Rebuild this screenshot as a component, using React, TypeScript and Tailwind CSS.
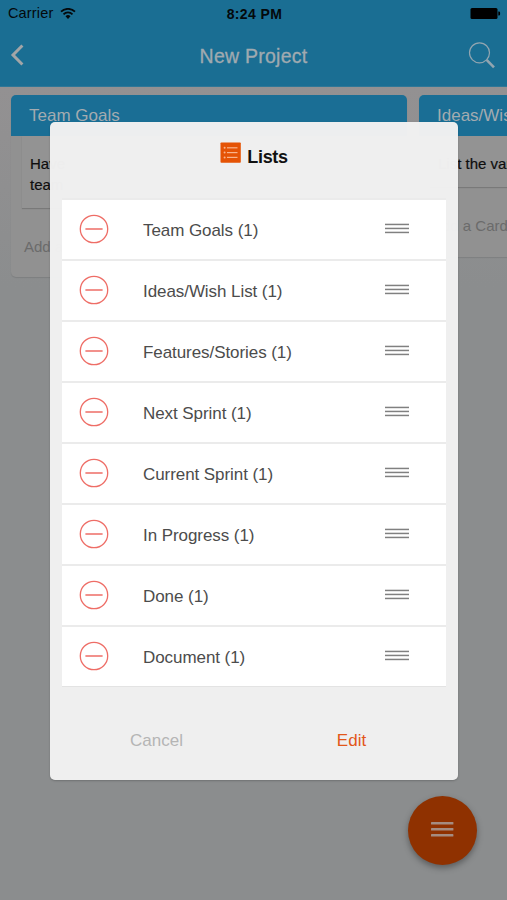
// src/App.tsx
import type { ReactNode } from 'react';

// ─────────────────────────────────────────────────────────────────────────────
// Static seed data
// ─────────────────────────────────────────────────────────────────────────────

interface ProjectList {
  id: number;
  name: string;
  count: number;
}

const LISTS: ProjectList[] = [
  { id: 1, name: 'Team Goals',       count: 1 },
  { id: 2, name: 'Ideas/Wish List',  count: 1 },
  { id: 3, name: 'Features/Stories', count: 1 },
  { id: 4, name: 'Next Sprint',      count: 1 },
  { id: 5, name: 'Current Sprint',   count: 1 },
  { id: 6, name: 'In Progress',      count: 1 },
  { id: 7, name: 'Done',             count: 1 },
  { id: 8, name: 'Document',         count: 1 },
];

// ── Icons ────────────────────────────────────────────────────────────────────

function WifiIcon() {
  return (
    <svg width="16" height="12" viewBox="0 0 16 12" fill="none" stroke="#04090c" strokeWidth="1.8">
      <path d="M1 3.7a10 10 0 0 1 14 0" />
      <path d="M3.5 6.3a6.4 6.4 0 0 1 9 0" />
      <path d="M8 10.9 5.5 8.3a3.6 3.6 0 0 1 5 0Z" fill="#04090c" stroke="none" />
    </svg>
  );
}

function BatteryIcon() {
  return (
    <svg width="31" height="12" viewBox="0 0 31 12" fill="#000">
      <rect x="0.5" y="0" width="27" height="11" rx="1.5" />
      <path d="M28.3 3.5h0.6a1.2 1.2 0 0 1 1.2 1.2v1.6a1.2 1.2 0 0 1-1.2 1.2h-0.6z" />
    </svg>
  );
}

function BackIcon() {
  return (
    <svg width="14" height="22" viewBox="0 0 14 22" fill="none" stroke="#a2a5a7" strokeWidth="3">
      <path d="M12.4 1.5 3 11l9.4 9.5" />
    </svg>
  );
}

function SearchIcon() {
  return (
    <svg width="28" height="28" viewBox="0 0 28 28" fill="none" stroke="#92a5b0">
      <circle cx="11.5" cy="11.8" r="10" strokeWidth="1.2" />
      <path d="M18.6 18.9 26 26.3" strokeWidth="2.6" />
    </svg>
  );
}

function ListBadgeIcon() {
  return (
    <svg width="21" height="21" viewBox="0 0 21 21">
      <rect x="0.5" y="0.5" width="20.3" height="20.3" rx="0.8" fill="#e55305" />
      <g fill="#f9b48c">
        <circle cx="4.6" cy="5.8" r="1" />
        <circle cx="4.6" cy="10.6" r="1" />
        <circle cx="4.6" cy="15.4" r="1" />
        <rect x="7" y="5.2" width="10.5" height="1.2" />
        <rect x="7" y="10" width="10.5" height="1.2" />
        <rect x="7" y="14.8" width="10.5" height="1.2" />
      </g>
    </svg>
  );
}

function RemoveIcon() {
  return (
    <svg width="30" height="30" viewBox="0 0 30 30" fill="none" stroke="#ee6d66" strokeWidth="1.3">
      <circle cx="15" cy="15" r="13.7" />
      <path d="M6.4 15h17.2" strokeWidth="1.5" />
    </svg>
  );
}

function DragIcon() {
  return (
    <svg width="24" height="11" viewBox="0 0 24 11" fill="#808080">
      <rect x="0" y="0.7" width="24" height="1.5" />
      <rect x="0" y="4.7" width="24" height="1.5" />
      <rect x="0" y="8.7" width="24" height="1.5" />
    </svg>
  );
}

function MenuIcon() {
  return (
    <svg width="23" height="17" viewBox="0 0 23 17" fill="#a58c80">
      <rect x="0" y="1" width="22.4" height="2.5" rx="0.6" />
      <rect x="0" y="7" width="22.4" height="2.5" rx="0.6" />
      <rect x="0" y="13.1" width="22.4" height="2.5" rx="0.6" />
    </svg>
  );
}

// ── Board ────────────────────────────────────────────────────────────────────

interface ColumnProps {
  title: string;
  children: ReactNode;
}

function Column({ title, children }: ColumnProps) {
  return (
    <section className="w-[396px] shrink-0 self-start rounded-[5px] bg-[#919191] shadow-[0_1px_1px_rgba(0,0,0,0.1)]">
      <h2 className="h-[41px] rounded-t-[5px] bg-[#1a6e95] pl-[18px] text-[17px] leading-[41px] text-[#a3abb0]">
        {title}
      </h2>
      {children}
    </section>
  );
}

function Board() {
  return (
    <main className="flex flex-1 gap-3 overflow-hidden bg-[linear-gradient(#939192_0px,#8b8d8e_200px)] pt-[8px] pl-[11px]">
      <Column title="Team Goals">
        <div className="mx-[11px] h-[72px] bg-[#939393] px-2 pt-[17px] text-[15px] leading-[21px] text-[#0e0e0e] shadow-[0_1px_1px_rgba(0,0,0,0.16)] [-webkit-text-stroke:0.2px]">
          Have<br />team
        </div>
        <p className="h-[69px] pt-[27px] pl-[13px] text-[15px] leading-6 text-[#6b6b6b]">Add a Card</p>
      </Column>
      <Column title="Ideas/Wish List">
        <div className="mx-[11px] h-[51px] bg-[#939393] px-2 pt-[17px] text-[15px] leading-[21px] whitespace-nowrap text-[#0e0e0e] shadow-[0_1px_1px_rgba(0,0,0,0.16)] [-webkit-text-stroke:0.2px]">
          List the various
        </div>
        <p className="h-[70px] pt-[27px] pl-[13px] text-[15px] leading-6 text-[#6b6b6b]">Add a Card</p>
      </Column>
    </main>
  );
}

// ── Dialog ───────────────────────────────────────────────────────────────────

function ListRow({ list }: { list: ProjectList }) {
  return (
    <li className="flex h-[61px] items-center border-t-[2px] border-[#ebebeb] bg-white pr-[37px] pb-[2px] pl-[17px]">
      <RemoveIcon />
      <span className="ml-[34px] flex-1 pt-[4px] text-[17px] leading-6 tracking-[-0.07px] text-[#4c4c4c]">
        {list.name} ({list.count})
      </span>
      <DragIcon />
    </li>
  );
}

function ListsDialog() {
  return (
    <div role="dialog" className="h-[658px] w-[408px] rounded-[5px] bg-[#f0f0f0]/99 px-3 shadow-[0_1px_2px_rgba(0,0,0,0.2)]">
      <header className="flex h-[76px] justify-center gap-[6px] pt-[20px]">
        <ListBadgeIcon />
        <h1 className="text-[18px] leading-[30px] font-bold tracking-[-0.3px] text-[#111]">Lists</h1>
      </header>
      <ul className="border-b border-[#e3e3e3]">
        {LISTS.map((list) => (
          <ListRow key={list.id} list={list} />
        ))}
      </ul>
      <footer className="flex pt-[42px] text-[17px] leading-6">
        <button className="w-[189px] text-center text-[#b5b5b5]">Cancel</button>
        <button className="flex-1 pl-[6px] text-center text-[#e2571a]">Edit</button>
      </footer>
    </div>
  );
}

// ─────────────────────────────────────────────────────────────────────────────

export default function App() {
  return (
    <div className="relative flex h-[900px] w-[507px] flex-col overflow-hidden font-['Liberation_Sans',Arial,sans-serif]">

      {/* ── Status bar and navigation ─────────────────────────────────────── */}
      <header className="h-[87px] shrink-0 border-b border-[#2f7797] bg-[#1a6e93]">
        <div className="grid h-[27px] grid-cols-3 items-center pr-[6px] pl-2 text-[14.5px] text-[#04090c]">
          <div className="flex items-center gap-[7px] pt-px">
            <span className="tracking-[0.15px]">Carrier</span>
            <WifiIcon />
          </div>
          <span className="pt-px text-center text-[14px] font-bold tracking-[0.4px]">8:24 PM</span>
          <div className="flex justify-end">
            <BatteryIcon />
          </div>
        </div>
        <div className="flex h-[56px] items-center justify-between pr-[11px] pl-[10px]">
          <BackIcon />
          <span className="pt-[4px] pl-[15px] text-[19.5px] tracking-[0.25px] text-[#a0aab0] [-webkit-text-stroke:0.3px]">
            New Project
          </span>
          <SearchIcon />
        </div>
      </header>

      <Board />

      {/* ── Floating menu button ──────────────────────────────────────────── */}
      <button
        aria-label="Menu"
        className="absolute right-[30px] bottom-[35px] flex size-[69px] items-center justify-center rounded-full bg-[#8f3100] pb-[2px] shadow-[0_3px_6px_rgba(0,0,0,0.35)]"
      >
        <MenuIcon />
      </button>

      {/* ── Lists dialog ──────────────────────────────────────────────────── */}
      <div className="absolute inset-0 flex items-start pt-[122px] pl-[50px]">
        <ListsDialog />
      </div>

    </div>
  );
}
